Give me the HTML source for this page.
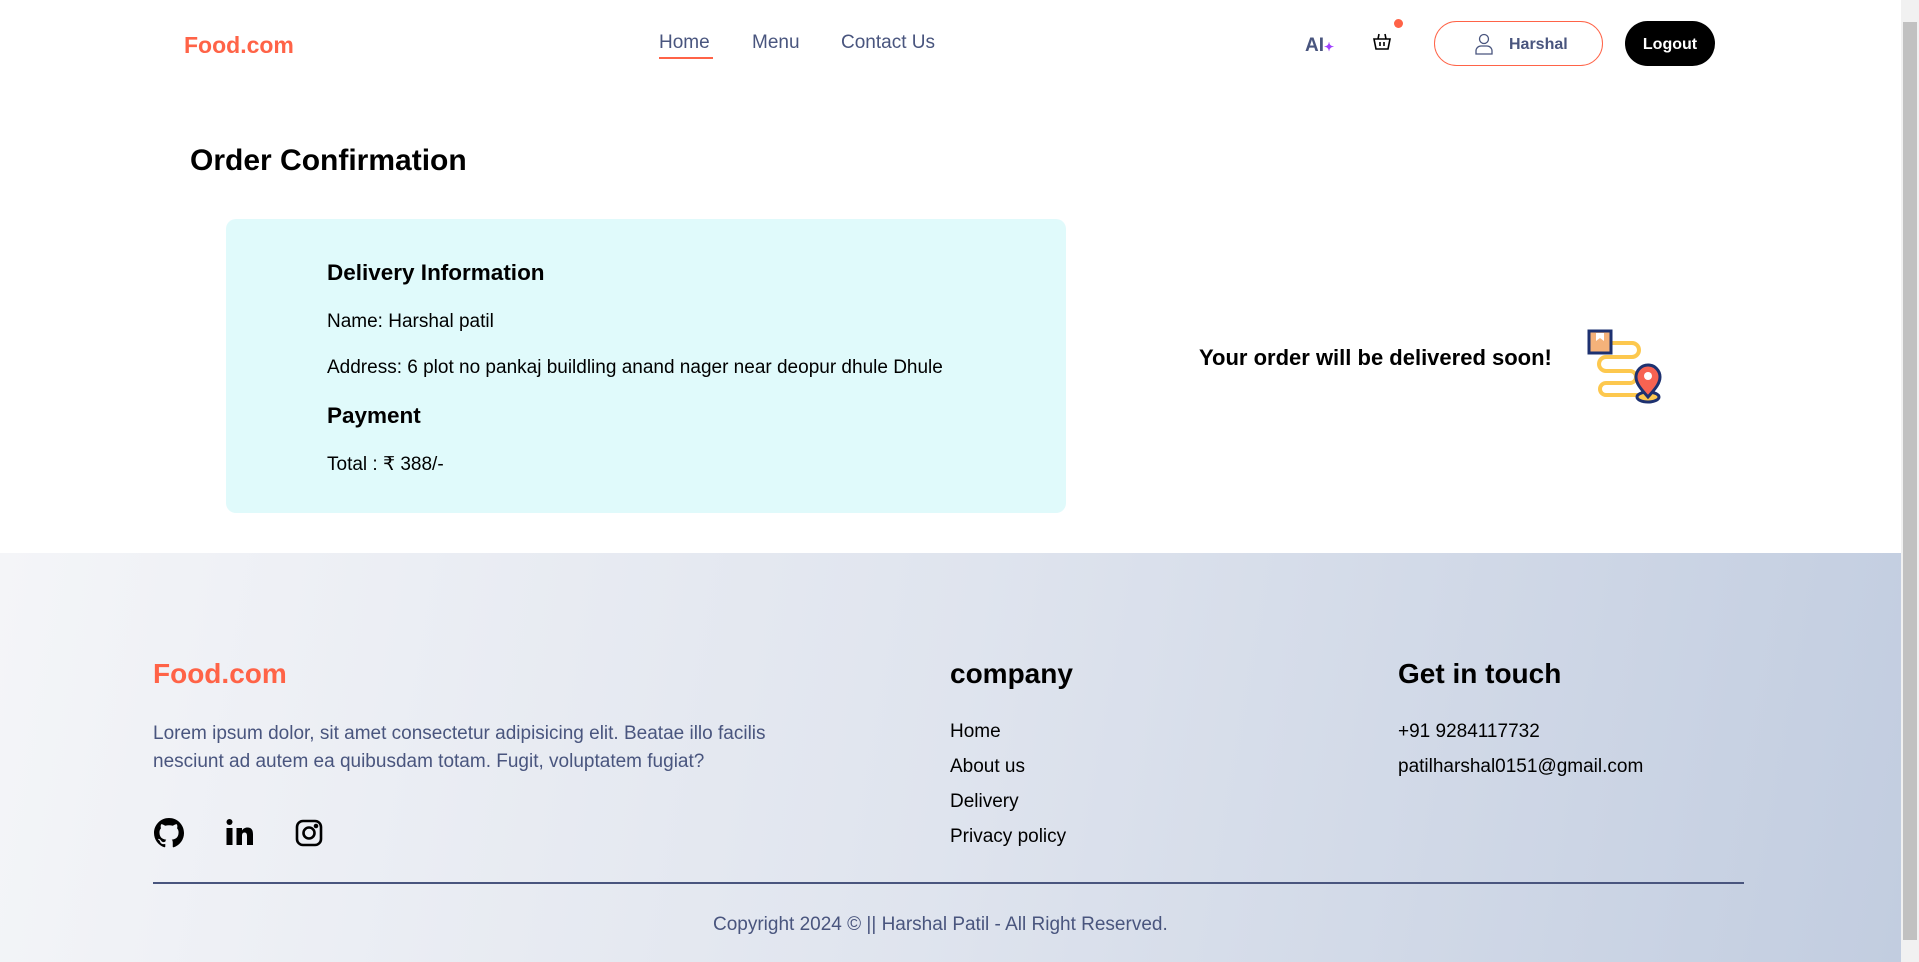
<!DOCTYPE html>
<html><head><meta charset="utf-8"><style>
*{margin:0;padding:0;box-sizing:border-box}
html,body{width:1919px;height:962px;overflow:hidden;font-family:"Liberation Sans",sans-serif;background:#fff;position:relative}
.a{position:absolute;white-space:nowrap}
.nav{color:#49557e;font-size:19px}
.foot{position:absolute;left:0;top:553px;width:1901px;height:409px;background:linear-gradient(100deg,#f4f5f8 0%,#dfe4ee 50%,#c2cde0 100%)}
.sb{position:absolute;left:1901px;top:0;width:18px;height:962px;background:#f1f1f1}
.sb div{position:absolute;left:2px;top:22px;width:14px;height:918px;background:#c1c1c1}
.t19{font-size:19px}
</style></head><body>
<div class="a" style="left:184px;top:32px;font-size:23px;font-weight:bold;color:#ff6347">Food.com</div>
<div class="a nav" style="left:659px;top:32px">Home</div>
<div class="a" style="left:659px;top:57px;width:54px;height:2px;background:#ff6347"></div>
<div class="a nav" style="left:752px;top:32px">Menu</div>
<div class="a nav" style="left:841px;top:32px">Contact Us</div>
<div class="a" style="left:1305px;top:35px;font-size:19px;font-weight:bold;color:#49557e">AI<span style="color:#a040ff;font-size:12px">✦</span></div>
<svg class="a" style="left:1372px;top:32px" width="20" height="20" viewBox="0 0 20 20" fill="none" stroke="#000" stroke-width="1.6"><path d="M2 7h16l-2 10H4z M6 7l1-5 M14 7l-1-5 M8 10v4 M12 10v4"/></svg>
<div class="a" style="left:1394px;top:19px;width:9px;height:9px;border-radius:50%;background:#ff6347"></div>
<div class="a" style="left:1434px;top:21px;width:169px;height:45px;border:1px solid #ff6347;border-radius:25px"></div>
<svg class="a" style="left:1475px;top:33px" width="18" height="22" viewBox="0 0 18 22" fill="none" stroke="#49557e" stroke-width="1.3"><circle cx="9" cy="6" r="4.5"/><path d="M1 21v-3a5 5 0 0 1 5-5h6a5 5 0 0 1 5 5v3z"/></svg>
<div class="a" style="left:1509px;top:36px;font-size:16px;font-weight:bold;color:#49557e">Harshal</div>
<div class="a" style="left:1625px;top:21px;width:90px;height:45px;border-radius:25px;background:#000;color:#fff;font-size:16px;font-weight:bold;text-align:center;line-height:47px">Logout</div>

<div class="a" style="left:190px;top:144px;font-size:30px;font-weight:bold;color:#000">Order Confirmation</div>
<div class="a" style="left:226px;top:219px;width:840px;height:294px;background:#e0fafb;border-radius:10px"></div>
<div class="a" style="left:327px;top:260px;font-size:22.5px;font-weight:bold">Delivery Information</div>
<div class="a t19" style="left:327px;top:311px">Name: Harshal patil</div>
<div class="a t19" style="left:327px;top:357px">Address: 6 plot no pankaj buildling anand nager near deopur dhule Dhule</div>
<div class="a" style="left:327px;top:403px;font-size:22.5px;font-weight:bold">Payment</div>
<div class="a t19" style="left:327px;top:453px">Total : ₹ 388/-</div>

<div class="a" style="left:1199px;top:345px;font-size:22px;font-weight:bold">Your order will be delivered soon!</div>
<svg class="a" style="left:1580px;top:325px" width="85" height="80" viewBox="0 0 85 80" fill="none">
<path d="M30 18h22a7 7 0 0 1 0 14H26a7 7 0 0 0 0 14h24a6 6 0 0 1 0 12H26a6 6 0 0 0 0 12h32" stroke="#fdc84e" stroke-width="4"/>
<rect x="9" y="6" width="22" height="22" fill="#f5b27a" stroke="#1d3170" stroke-width="3"/>
<path d="M16 8v8l4-3 4 3V8" fill="#fff"/>
<ellipse cx="68" cy="72" rx="11" ry="5" fill="#fdc84e" stroke="#1d3170" stroke-width="3"/>
<path d="M68 72c-8-9-12-14-12-20a12 12 0 0 1 24 0c0 6-4 11-12 20z" fill="#f76352" stroke="#1d3170" stroke-width="3"/>
<circle cx="68" cy="51" r="4" fill="#fff"/>
</svg>

<div class="foot"></div>
<div class="a" style="left:153px;top:658px;font-size:28px;font-weight:bold;color:#ff6347">Food.com</div>
<div class="a t19" style="left:153px;top:720px;color:#49557e;white-space:normal;width:660px;line-height:28px">Lorem ipsum dolor, sit amet consectetur adipisicing elit. Beatae illo facilis nesciunt ad autem ea quibusdam totam. Fugit, voluptatem fugiat?</div>
<svg class="a" style="left:154px;top:818px" width="30" height="30" viewBox="0 0 16 16"><path fill="#000" d="M8 0C3.580 0 0 3.58 0 8c0 3.54 2.29 6.53 5.47 7.59.4.07.55-.17.55-.38v-1.34c-2.230.48-2.7-1.07-2.7-1.07-.36-.92-.89-1.170-.89-1.17-.73-.5.05-.49.05-.49.8.06 1.23.83 1.23.83.71 1.22 1.87.87 2.33.66.07-.52.28-.87.51-1.07-1.78-.2-3.64-.89-3.64-3.95 0-.87.31-1.59.82-2.15-.08-.2-.36-1.02.08-2.12 0 0 .67-.21 2.2.82a7.600 7.600 0 0 1 4 0c1.53-1.04 2.2-.82 2.2-.82.44 1.1.16 1.92.08 2.12.51.56.82 1.27.82 2.15 0 3.07-1.87 3.75-3.65 3.95.29.25.54.73.54 1.48v2.2c0 .21.15.46.55.38A8 8 0 0 0 16 8c0-4.42-3.58-8-8-8z"/></svg>
<svg class="a" style="left:225px;top:818px" width="29" height="28" viewBox="0 0 28 28"><circle cx="4" cy="4" r="3" fill="#000"/><rect x="1" y="10" width="6" height="17" fill="#000"/><path d="M11 10h5.5v2.5c1-1.8 3-3 5.5-3 4 0 5.5 2.5 5.5 7V27h-6V18c0-2-.5-3.5-2.5-3.5S16.5 16 16.5 18v9H11z" fill="#000"/></svg>
<svg class="a" style="left:295px;top:819px" width="28" height="28" viewBox="0 0 28 28" fill="none" stroke="#000" stroke-width="2.6"><rect x="2" y="2" width="24" height="24" rx="6"/><circle cx="14" cy="14" r="5.5"/><circle cx="21" cy="7" r="1" fill="#000"/></svg>

<div class="a" style="left:950px;top:658px;font-size:28px;font-weight:bold">company</div>
<div class="a t19" style="left:950px;top:721px">Home</div>
<div class="a t19" style="left:950px;top:756px">About us</div>
<div class="a t19" style="left:950px;top:791px">Delivery</div>
<div class="a t19" style="left:950px;top:826px">Privacy policy</div>
<div class="a" style="left:1398px;top:658px;font-size:28px;font-weight:bold">Get in touch</div>
<div class="a t19" style="left:1398px;top:721px">+91 9284117732</div>
<div class="a t19" style="left:1398px;top:756px">patilharshal0151@gmail.com</div>
<div class="a" style="left:153px;top:882px;width:1591px;height:2px;background:#49557e"></div>
<div class="a t19" style="left:713px;top:914px;color:#49557e">Copyright 2024 © || Harshal Patil - All Right Reserved.</div>
<div class="sb"><div></div></div>
</body></html>
